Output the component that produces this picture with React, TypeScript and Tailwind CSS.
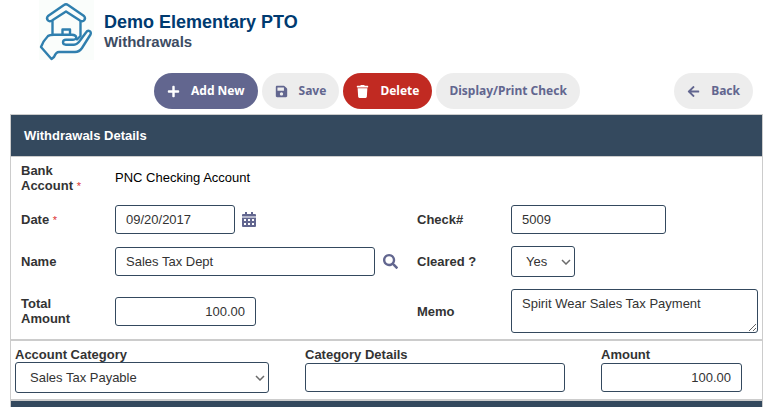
import type { ReactNode } from "react";
import { FaArrowLeft, FaPlus, FaSave, FaTrash, FaSearch } from "react-icons/fa";

const field =
  "h-[29px] rounded-[3px] border border-[#34495e] bg-white px-[10px] text-[13px] text-[#333]";
const pill =
  "flex h-9 items-center rounded-full px-[13px] font-['Noto_Sans',sans-serif] text-[12px] font-bold whitespace-nowrap";
const labelText = "text-[13px] leading-[15px] font-bold text-[#333]";

function Required() {
  return <span className="text-[11px] font-normal text-[#d33]">*</span>;
}

function Label({ htmlFor, children }: { htmlFor: string; children: ReactNode }) {
  return (
    <label htmlFor={htmlFor} className={labelText}>
      {children}
    </label>
  );
}

function Select({ id, width, options }: { id: string; width: string; options: string[] }) {
  return (
    <div className={`relative ${width}`}>
      <select
        id={id}
        className="block h-[31px] w-full appearance-none rounded-[3px] border border-[#34495e] bg-white px-[14px] text-[13px] text-[#333]"
        defaultValue={options[0]}
      >
        {options.map((option) => (
          <option key={option}>{option}</option>
        ))}
      </select>
      <svg
        viewBox="0 0 10 6"
        className="pointer-events-none absolute top-[13px] right-1 h-[6px] w-[10px]"
        fill="none"
        stroke="#6b6b6b"
        strokeWidth="1.5"
        aria-hidden="true"
      >
        <path d="M1 1 L5 5 L9 1" />
      </svg>
    </div>
  );
}

function Logo() {
  return (
    <svg
      viewBox="0 0 64 64"
      className="h-16 w-16"
      fill="none"
      stroke="#2f7fae"
      strokeWidth="2.4"
      strokeLinejoin="round"
      strokeLinecap="round"
      aria-hidden="true"
    >
      <path fill="#fafdfb" stroke="none" d="M5 0h55v60H5z" />
      <path d="M30 5 Q32 3.500 34 5 L50 16 Q52 18 50 20.500 Q48.500 22 46 20.500 L32 11.500 L18 20.500 Q15.500 22 14 20.500 Q12 18 14 16 Z" />
      <path d="M18.500 21.500 V34.500 M46.500 21.500 V36 L43 39.500" />
      <path d="M28.500 34 V29.500 H36 V34" />
      <path d="M17.500 59 L7 47 C8.500 43 11 39 14 36 C15.500 34.700 18 34.700 20 34.700 H38 C43 35 44 39.500 39 39.800 H32 C28 40 28 44.500 32 44.700 H40 C44 44.700 45 42 47.500 38.500 L52 32.500 C54 29.500 58 31 56.500 34.500 L48 48 C46 51 44 52 41 52 H25 C22 52 21 54.500 20 57 Z" />
    </svg>
  );
}

function Calendar() {
  return (
    <svg viewBox="0 0 14 15" className="h-[15px] w-[14px]" aria-hidden="true">
      <path
        fill="#62668f"
        d="M3 0h2v2h4V0h2v2h2a1 1 0 0 1 1 1v11a1 1 0 0 1-1 1H1a1 1 0 0 1-1-1V3a1 1 0 0 1 1-1h2z"
      />
      <path fill="#b7b9cd" d="M0 4h14v2H0z" />
      <path fill="#fff" d="M2 7h2v2H2zM6 7h2v2H6zM10 7h2v2h-2zM2 11h2v2H2zM6 11h2v2H6zM10 11h2v2h-2z" />
    </svg>
  );
}

export default function App() {
  return (
    <div className="bg-white font-['Liberation_Sans',Arial,sans-serif]">
      <header className="flex h-[73px] items-start pl-[34px]">
        <Logo />
        <div className="pt-3 pl-[6px]">
          <h1 className="text-[18px] leading-5 font-bold text-[#003a70]">Demo Elementary PTO</h1>
          <h2 className="text-[15px] leading-5 font-bold text-[#3d4c63]">Withdrawals</h2>
        </div>
      </header>

      <div className="flex justify-between pr-4 pb-[5px] pl-[154px]">
        <div className="flex gap-1">
          <button type="button" className={`${pill} gap-[11px] bg-[#62668f] text-white`}>
            <FaPlus size={13} />
            Add New
          </button>
          <button type="button" className={`${pill} gap-[11px] bg-[#ededed] text-[#62668f]`}>
            <FaSave size={13} />
            Save
          </button>
          <button type="button" className={`${pill} gap-[11px] bg-[#c12a22] text-white`}>
            <FaTrash size={13} />
            Delete
          </button>
          <button type="button" className={`${pill} bg-[#ededed] text-[#62668f]`}>
            Display/Print Check
          </button>
        </div>
        <button type="button" className={`${pill} gap-[11px] bg-[#ededed] text-[#62668f]`}>
          <FaArrowLeft size={13} />
          Back
        </button>
      </div>

      <main className="mr-[6px] ml-[10px] border border-b-0 border-[#ccc]">
        <h3 className="border-b border-[#ccc] bg-[#34495e] px-[13px] text-[13px] leading-[41px] font-bold text-white">
          Withdrawals Details
        </h3>
        <form>
          <div className="grid grid-cols-[94px_302px_94px_1fr] grid-rows-[42px_41px_43px_56px] items-center border-b-2 border-[#ccc] pr-1 pl-[10px]">
            <Label htmlFor="bank">
              Bank
              <br />
              Account <Required />
            </Label>
            <output id="bank" className="col-span-3 text-[13px] text-black">
              PNC Checking Account
            </output>

            <Label htmlFor="date">
              Date <Required />
            </Label>
            <div className="flex items-center gap-[7px]">
              <input id="date" className={`${field} w-[120px]`} defaultValue="09/20/2017" />
              <button type="button" aria-label="Choose date">
                <Calendar />
              </button>
            </div>
            <Label htmlFor="check">Check#</Label>
            <input id="check" className={`${field} w-[155px]`} defaultValue="5009" />

            <Label htmlFor="name">Name</Label>
            <div className="flex items-center gap-2">
              <input id="name" className={`${field} w-[260px]`} defaultValue="Sales Tax Dept" />
              <button type="button" aria-label="Search names" className="text-[#62668f]">
                <FaSearch size={15} />
              </button>
            </div>
            <Label htmlFor="cleared">Cleared ?</Label>
            <Select id="cleared" width="w-16" options={["Yes", "No"]} />

            <Label htmlFor="total">
              Total
              <br />
              Amount
            </Label>
            <input id="total" className={`${field} w-[141px] text-right`} defaultValue="100.00" />
            <Label htmlFor="memo">Memo</Label>
            <textarea
              id="memo"
              className="h-11 w-full rounded-[3px] border border-[#34495e] px-[10px] py-[6px] text-[13px] leading-[15px] text-[#333]"
              defaultValue="Spirit Wear Sales Tax Payment"
            />
          </div>

          <div className="grid h-[60px] grid-cols-[290px_296px_1fr] items-start border-b-2 border-[#ccc] pt-[6px] pl-1">
            <div className="flex flex-col">
              <Label htmlFor="category">Account Category</Label>
              <Select id="category" width="w-[254px]" options={["Sales Tax Payable"]} />
            </div>
            <div className="flex flex-col gap-px">
              <Label htmlFor="details">Category Details</Label>
              <input id="details" className={`${field} w-[260px]`} />
            </div>
            <div className="flex flex-col gap-px">
              <Label htmlFor="amount">Amount</Label>
              <input id="amount" className={`${field} w-[141px] text-right`} defaultValue="100.00" />
            </div>
          </div>
        </form>
        <div className="h-[6px] bg-[#34495e]" />
      </main>
    </div>
  );
}
